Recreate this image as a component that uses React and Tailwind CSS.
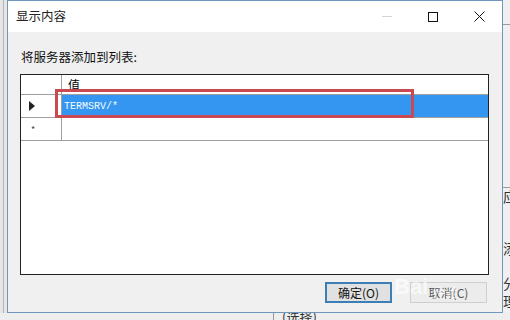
import React from 'react';

const cjk = { fontFamily: '"Microsoft YaHei", "Noto Sans CJK SC", sans-serif' };

const TitleBar = () => (
  <div className="flex h-[31px] items-center bg-white">
    <span className="ml-[8px] text-[12.5px] text-[#222]">显示内容</span>
    <div className="ml-auto flex h-full items-center">
      <div className="flex w-[46px] justify-center">
        <div className="h-px w-[10px] bg-[#d4d4d4]" />
      </div>
      <div className="flex w-[46px] justify-center">
        <div className="h-[10px] w-[10px] border border-[#111]" />
      </div>
      <div className="flex w-[46px] justify-center">
        <svg width="11" height="11" viewBox="0 0 11 11" stroke="#111" strokeWidth="1">
          <path d="M0.5 0.5 L10.5 10.5 M10.5 0.5 L0.5 10.5" />
        </svg>
      </div>
    </div>
  </div>
);

const Grid = () => (
  <div className="relative ml-[12px] flex h-[201px] w-[469px] flex-col border border-[#222] bg-white">
    {/* header */}
    <div className="flex h-[20px] border-b border-[#a0a0a0]">
      <div className="w-[41px] border-r border-[#a0a0a0]" />
      <div className="pl-[6px] text-[12px] leading-[20px] text-black">值</div>
    </div>
    {/* row 1 */}
    <div className="flex h-[23px] border-b border-[#a0a0a0]">
      <div className="flex w-[41px] items-center border-r border-[#a0a0a0] pl-[8px]">
        <svg width="6" height="10" viewBox="0 0 6 10">
          <path d="M0 0 L6 5 L0 10 Z" fill="#222" />
        </svg>
      </div>
      <div className="flex flex-1 items-center bg-[#3596f2] pl-[2px]">
        <span className="font-['Liberation_Mono'] text-[10px] text-[#f4fbff]">TERMSRV/*</span>
      </div>
    </div>
    {/* row 2 */}
    <div className="flex h-[23px] border-b border-[#a0a0a0]">
      <div className="flex w-[41px] items-center border-r border-[#a0a0a0] pl-[10px]">
        <span className="text-[9px] leading-none text-[#444]">*</span>
      </div>
      <div className="flex-1" />
    </div>
    <div className="flex-1" />
    {/* highlight */}
    <div className="absolute left-[34px] top-[14px] h-[29px] w-[359px] border-[3px] border-[#c94a50]" />
  </div>
);

const Buttons = () => (
  <div className="relative mt-[7px] flex justify-end gap-[18px] pr-[15px]">
    <div className="flex h-[21px] w-[67px] items-center justify-center border-2 border-[#3d7fb4] bg-[#e1e1e1] text-[12px] text-[#111]">
      确定(O)
    </div>
    <div className="flex h-[21px] w-[77px] items-center justify-center border border-[#cfcfcf] bg-[#ececec] text-[12px] text-[#555]">
      取消(C)
    </div>
    <div className="pointer-events-none absolute left-[386px] top-[-6px] flex items-end gap-[4px] text-white opacity-60">
      <span className="font-['Liberation_Sans'] text-[22px] font-bold leading-none">Bai</span>
      <span className="text-[13px] leading-none">经验</span>
    </div>
  </div>
);

export default function App() {
  return (
    <div className="flex h-[320px] w-[510px] flex-col overflow-hidden bg-[#eeeeee]" style={cjk}>
      <div className="flex h-[313px]">
        <div className="flex w-[7px] bg-[#e6e6e6]">
          <div className="ml-[3px] w-px bg-[#b5b5b5]" />
        </div>
        <div className="flex w-[496px] flex-col border border-[#6f97bd] bg-[#f0f0f0]">
          <TitleBar />
          <div className="pl-[13px] pt-[15px] text-[12.5px] leading-[20px] text-[#111]">将服务器添加到列表:</div>
          <div className="mt-[7px]">
            <Grid />
          </div>
          <Buttons />
        </div>
        <div className="relative w-[7px] overflow-hidden bg-[#f0f0f0]">
          <div className="absolute left-0 top-[24px] h-px w-full bg-[#999]" />
          <div className="absolute left-0 top-[187px] h-px w-full bg-[#999]" />
          <span className="absolute left-0 top-[189px] text-[14px] leading-none text-[#333]">应</span>
          <span className="absolute left-0 top-[241px] text-[14px] leading-none text-[#333]">添</span>
          <span className="absolute left-0 top-[276px] text-[14px] leading-none text-[#333]">分</span>
          <span className="absolute left-0 top-[294px] text-[14px] leading-none text-[#333]">理</span>
        </div>
      </div>
      <div className="flex flex-1 overflow-hidden">
        <div className="ml-[273px] w-px bg-[#999]" />
        <span className="ml-[8px] mt-[-3px] text-[13px] leading-none text-[#333]">(选择)</span>
      </div>
    </div>
  );
}
